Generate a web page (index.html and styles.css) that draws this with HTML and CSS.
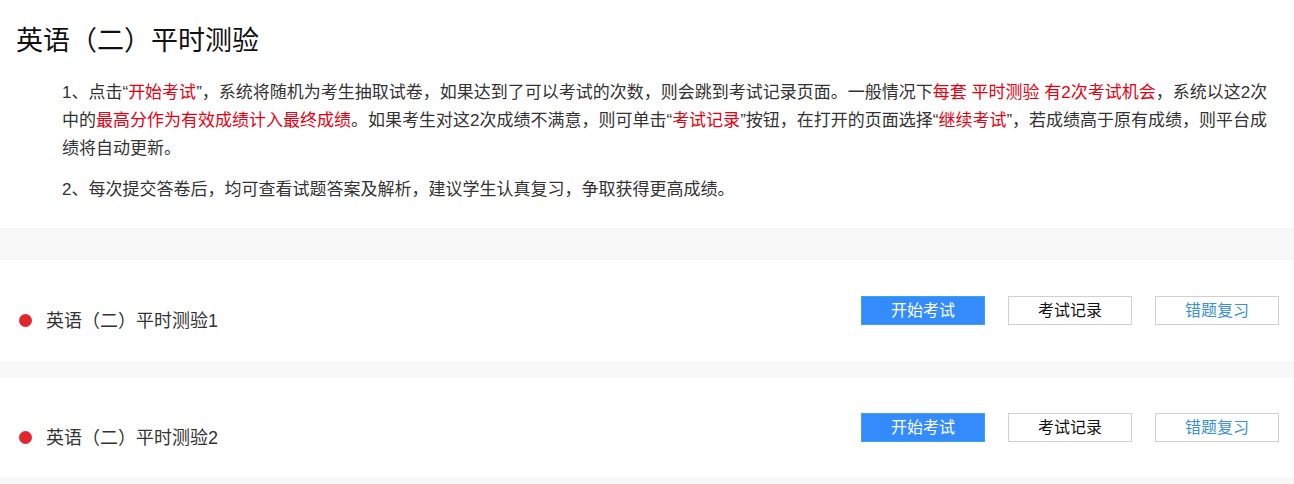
FILE: index.html
```html
<!DOCTYPE html>
<html lang="zh-CN">
<head>
<meta charset="utf-8">
<title>英语（二）平时测验</title>
<link rel="stylesheet" href="styles.css">
</head>
<body>
<div class="intro">
  <h1 class="title">英语（二）平时测验</h1>
  <div class="notes">
    <p class="note">1、点击“<span class="hl">开始考试</span>”，系统将随机为考生抽取试卷，如果达到了可以考试的次数，则会跳到考试记录页面。一般情况下<span class="hl">每套 平时测验 有2次考试机会</span>，系统以这2次中的<span class="hl">最高分作为有效成绩计入最终成绩</span>。如果考生对这2次成绩不满意，则可单击“<span class="hl">考试记录</span>”按钮，在打开的页面选择“<span class="hl">继续考试</span>”，若成绩高于原有成绩，则平台成绩将自动更新。</p>
    <p class="note">2、每次提交答卷后，均可查看试题答案及解析，建议学生认真复习，争取获得更高成绩。</p>
  </div>
</div>
<div class="list">
  <div class="item">
    <div class="label"><span class="dot"></span>英语（二）平时测验1</div>
    <div class="actions">
      <button class="btn btn-primary">开始考试</button>
      <button class="btn btn-default">考试记录</button>
      <button class="btn btn-review">错题复习</button>
    </div>
  </div>
  <div class="item">
    <div class="label"><span class="dot"></span>英语（二）平时测验2</div>
    <div class="actions">
      <button class="btn btn-primary">开始考试</button>
      <button class="btn btn-default">考试记录</button>
      <button class="btn btn-review">错题复习</button>
    </div>
  </div>
</div>
</body>
</html>
```

FILE: styles.css
```css
* { box-sizing: border-box; }
html, body {
  margin: 0;
  padding: 0;
  background: #fff;
}
body {
  font-family: "Microsoft YaHei", "Liberation Sans", "Noto Sans CJK SC", sans-serif;
  color: #333;
}
.intro {
  padding: 21px 16px 24px 16px;
}
.title {
  margin: 0;
  font-size: 27px;
  line-height: 40px;
  font-weight: normal;
  color: #111;
}
.notes {
  margin-top: 18px;
  padding-left: 46px;
}
.note {
  margin: 0 0 13px 0;
  font-size: 17px;
  line-height: 28px;
  color: #333;
}
.note:last-child { margin-bottom: 0; }
.hl { color: #e60012; }

.list {
  background: #f8f8f8;
  padding: 32px 0 7px 0;
  display: flex;
  flex-direction: column;
  gap: 16px;
}
.item {
  background: #fff;
  height: 100px;
  padding: 36px 15px 0 19px;
  display: flex;
  justify-content: space-between;
  align-items: flex-start;
}
.item:first-child { height: 101px; }
.label {
  margin-top: 11px;
  display: flex;
  align-items: center;
  font-size: 18px;
  line-height: 28px;
  color: #333;
}
.dot {
  width: 13px;
  height: 13px;
  border-radius: 50%;
  background: #e0262f;
  margin-right: 14px;
  margin-top: -2px;
}
.actions {
  display: flex;
  gap: 23px;
}
.btn {
  width: 124px;
  height: 29px;
  padding: 0;
  font-family: inherit;
  font-size: 16px;
  line-height: 27px;
  background: #fff;
  border: 1px solid #d0d0d0;
  color: #111;
  cursor: pointer;
}
.btn-primary {
  background: #348cfc;
  border-color: #3aa5e2;
  color: #fff;
}
.btn-review {
  color: #3a90d4;
}
```
